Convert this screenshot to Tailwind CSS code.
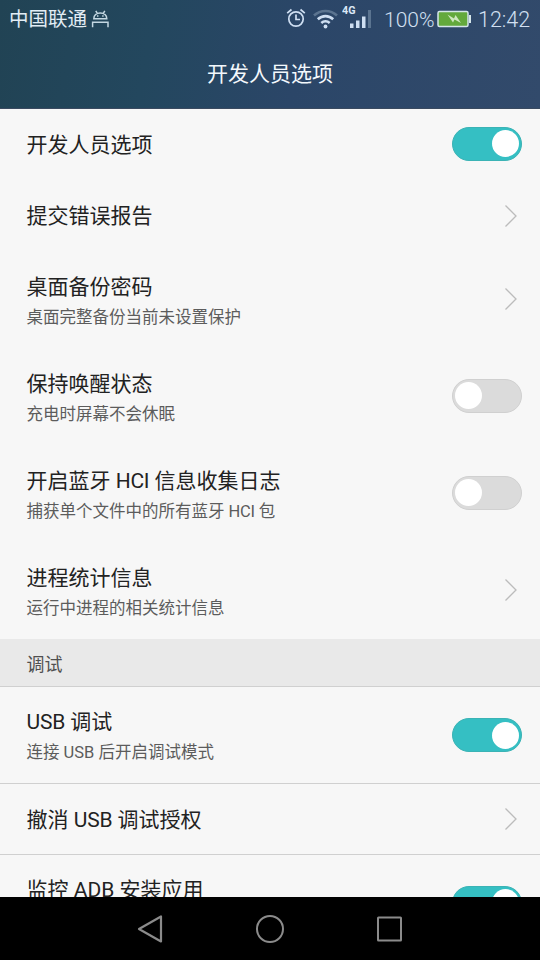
<!DOCTYPE html>
<html lang="zh-CN">
<head>
<meta charset="utf-8">
<title>开发人员选项</title>
<script src="https://cdn.jsdelivr.net/npm/@tailwindcss/browser@4"></script>
</head>
<body class="w-[540px] h-[960px] overflow-hidden flex flex-col bg-[#f7f7f7] font-[Roboto,'Noto_Sans_CJK_SC',sans-serif] text-[#222]">
<svg class="hidden">
  <symbol id="chevron" viewBox="0 0 14 24"><path d="M1.500 1.500 12 12 1.500 22.500" fill="none" stroke="#bcbcbc" stroke-width="1.300"/></symbol>
</svg>

<header class="h-[109px] shrink-0 flex flex-col bg-[linear-gradient(100deg,#214354_0%,#23475e_28%,#2b4668_55%,#324a6b_100%)] border-b border-[#3a4a60]">
  <div class="h-[39px] flex items-center pl-[9px] pr-[8px] text-[#d3e0f2]">
    <span class="text-[19.5px] leading-[38px] text-[#e2edf5] pt-px">中国联通</span>
    <svg class="ml-[4px] w-[18px] h-[18px] mb-[2px]" viewBox="0 0 18 18" fill="none" stroke="#c3d7e2" stroke-width="1.500">
      <path d="M2.800 8.700C3 5 5.600 2.900 9.300 2.900s6.300 2.100 6.500 5.800zM4.800.8l1.500 2.600M13.800.8l-1.500 2.600M1.600 17.300v-5.100h15.400v5.100"/>
      <path d="M6.700 5.200v1.500M11.900 5.200v1.500"/>
    </svg>
    <svg class="ml-auto w-[20px] h-[20px] mb-[3px]" viewBox="0 0 20 20" fill="none" stroke="#cfdff2" stroke-width="1.700">
      <circle cx="10" cy="11" r="7.200"/><path d="M10 6.500V11.500h4M1.200 5.200 5.500 1.500M18.800 5.200 14.500 1.500"/>
    </svg>
    <svg class="ml-[7px] w-[25px] h-[20px] mb-px" viewBox="0 0 25 20" fill="none" stroke="#cfdff2" stroke-width="2.600">
      <path d="M1 6.500C7.500.4 17.500.4 24 6.500" stroke="#5b7490"/><path d="M4.800 10.300c4.500-4.200 10.900-4.200 15.400 0M8.300 14c2.500-2.200 5.900-2.200 8.400 0"/><circle cx="12.500" cy="17.500" r="1.900" fill="#cfdff2" stroke="none"/>
    </svg>
    <svg class="ml-[4px] w-[31px] h-[26px] mb-[5px]" viewBox="0 0 31 26">
      <text x="0" y="10" font-size="10.500" font-weight="700" fill="#dce8f7" textLength="13.500" lengthAdjust="spacingAndGlyphs">4G</text>
      <path d="M8 19.500h3.500v4.500H8zM14 16.500h3.500v7.500H14zM20 12.500h3.500v11.500H20z" fill="#cfdff2"/><path d="M26 6h3v18h-3z" fill="#5b7490"/>
    </svg>
    <span class="ml-[11px] w-[52px] text-[21px] leading-[38px] whitespace-nowrap font-light pt-px">100%</span>
    <svg class="ml-[1px] w-[35px] h-[18px] mb-px" viewBox="0 0 35 18">
      <rect x="1" y="1.500" width="30" height="15" rx="1.500" fill="#63a93c" stroke="#d5e6ea" stroke-width="1.500"/><path d="M32 5h2v8h-2z" fill="#d5e6ea"/><path d="m10.500 4.500 6.500 4 1.500-3.500 5.500 8-6.500-3.500-1.500 3z" fill="#cfe8c0"/>
    </svg>
    <span class="ml-[6px] w-[54px] text-[21.5px] leading-[38px] font-light pt-px">12:42</span>
  </div>
  <h1 class="h-[69px] text-center text-[21px] leading-[70px] text-[#f3f8fc]">开发人员选项</h1>
</header>

<main class="h-[788px] shrink-0 overflow-hidden">
  <div class="h-[71px] pl-[26.5px] pr-[18px] flex items-center justify-between">
    <p class="text-[21px] leading-[30px] pt-px">开发人员选项</p>
    <span class="w-[70px] h-[34px] mb-[2px] rounded-full bg-[#35bfc3] border border-[#3bb3b5] flex items-center justify-end pr-[2px]"><i class="size-[27px] rounded-full bg-white"></i></span>
  </div>
  <div class="h-[71px] pl-[26.5px] pr-[22px] flex items-center justify-between">
    <p class="text-[21px] leading-[30px] pt-px">提交错误报告</p>
    <svg class="w-[14px] h-[24px]"><use href="#chevron"/></svg>
  </div>
  <div class="h-[97px] pl-[26.5px] pr-[22px] flex items-center justify-between">
    <div class="pt-[5px]"><p class="text-[21px] leading-[31px]">桌面备份密码</p><p class="text-[16.5px] leading-[30px] text-[#5c5c5c]">桌面完整备份当前未设置保护</p></div>
    <svg class="w-[14px] h-[24px] mb-px"><use href="#chevron"/></svg>
  </div>
  <div class="h-[97px] pl-[26.5px] pr-[18px] flex items-center justify-between">
    <div class="pt-[5px]"><p class="text-[21px] leading-[31px]">保持唤醒状态</p><p class="text-[16.5px] leading-[30px] text-[#5c5c5c]">充电时屏幕不会休眠</p></div>
    <span class="w-[70px] h-[34px] mb-[2px] rounded-full bg-[#dbdbdb] border border-[#d0d0d0] flex items-center pl-[2px]"><i class="size-[27px] rounded-full bg-white"></i></span>
  </div>
  <div class="h-[97px] pl-[26.5px] pr-[18px] flex items-center justify-between">
    <div class="pt-[5px]"><p class="text-[21px] leading-[31px]">开启蓝牙 <span class="tracking-[-0.3px]">HCI</span> 信息收集日志</p><p class="text-[16.5px] leading-[30px] text-[#5c5c5c]">捕获单个文件中的所有蓝牙 <span class="tracking-[-0.3px]">HCI</span> 包</p></div>
    <span class="w-[70px] h-[34px] mb-[2px] rounded-full bg-[#dbdbdb] border border-[#d0d0d0] flex items-center pl-[2px]"><i class="size-[27px] rounded-full bg-white"></i></span>
  </div>
  <div class="h-[97px] pl-[26.5px] pr-[22px] flex items-center justify-between">
    <div class="pt-[5px]"><p class="text-[21px] leading-[31px]">进程统计信息</p><p class="text-[16.5px] leading-[30px] text-[#5c5c5c]">运行中进程的相关统计信息</p></div>
    <svg class="w-[14px] h-[24px] mb-px"><use href="#chevron"/></svg>
  </div>
  <h2 class="h-[48px] pl-[26.5px] bg-[#e9e9e9] border-b border-[#d0d0d0] text-[18px] leading-[51px] text-[#505050]">调试</h2>
  <div class="h-[97px] pl-[26.5px] pr-[18px] flex items-center justify-between border-b border-[#d0d0d0]">
    <div class="pt-[5px]"><p class="text-[21px] leading-[31px]"><span class="tracking-[-0.2px]">USB</span> 调试</p><p class="text-[16.5px] leading-[30px] text-[#5c5c5c]">连接 USB 后开启调试模式</p></div>
    <span class="w-[70px] h-[34px] rounded-full bg-[#35bfc3] border border-[#3bb3b5] flex items-center justify-end pr-[2px]"><i class="size-[27px] rounded-full bg-white"></i></span>
  </div>
  <div class="h-[71px] pl-[26.5px] pr-[22px] flex items-center justify-between border-b border-[#d0d0d0]">
    <p class="text-[21px] leading-[30px] pt-px">撤消 <span class="tracking-[-0.2px]">USB</span> 调试授权</p>
    <svg class="w-[14px] h-[24px] mb-px"><use href="#chevron"/></svg>
  </div>
  <div class="h-[97px] pl-[26.5px] pr-[18px] flex items-center justify-between">
    <div class="pt-[3px]"><p class="text-[21px] leading-[31px]">监控 ADB 安装应用</p><p class="h-[30px]"></p></div>
    <span class="w-[70px] h-[34px] mb-[2px] rounded-full bg-[#35bfc3] border border-[#3bb3b5] flex items-center justify-end pr-[2px]"><i class="size-[27px] rounded-full bg-white"></i></span>
  </div>
</main>

<nav class="h-[63px] shrink-0 bg-black flex items-center justify-between px-[136px]">
  <svg class="w-[28px] h-[30px]" viewBox="0 0 28 30" fill="none" stroke="#8b8b8b" stroke-width="2.200" stroke-linejoin="round"><path d="M25 2.500v25L3 15z"/></svg>
  <svg class="w-[30px] h-[30px]" viewBox="0 0 30 30" fill="none" stroke="#8b8b8b" stroke-width="2"><circle cx="15" cy="15" r="13"/></svg>
  <svg class="w-[28px] h-[28px]" viewBox="0 0 28 28" fill="none" stroke="#8b8b8b" stroke-width="2"><rect x="2" y="2.500" width="23" height="23" rx=".5"/></svg>
</nav>
</body>
</html>
